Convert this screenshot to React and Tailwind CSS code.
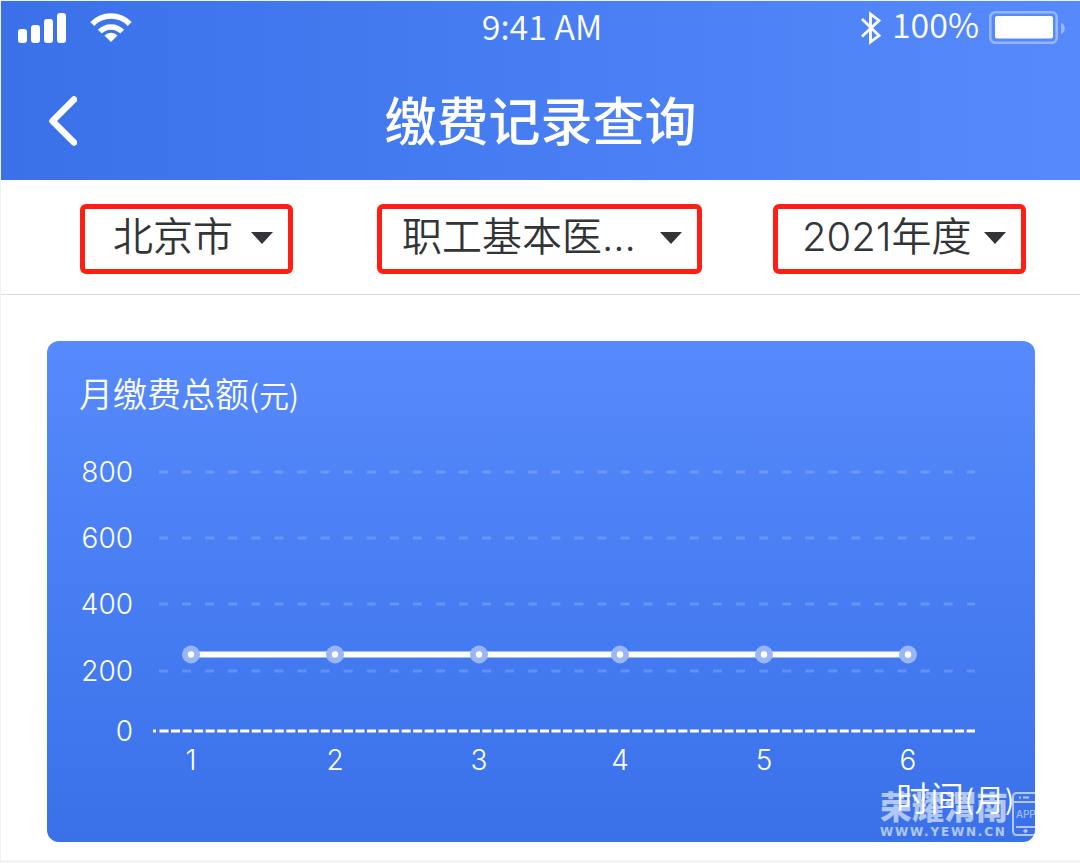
import React, { useState } from 'react';

const MONTHS = [
  { label: '1', x: 144, amount: 250 },
  { label: '2', x: 288, amount: 250 },
  { label: '3', x: 432, amount: 250 },
  { label: '4', x: 573, amount: 250 },
  { label: '5', x: 717, amount: 250 },
  { label: '6', x: 861, amount: 250 },
];

const TICKS = [
  { label: '800', y: 31 },
  { label: '600', y: 97 },
  { label: '400', y: 163 },
  { label: '200', y: 230 },
];

const amountToY = (amount) => 230 - ((amount - 200) / 200) * 66;

const SignalIcon = () => (
  <svg width="48" height="30" viewBox="0 0 48 30" fill="#fff" aria-hidden="true">
    <rect x="0" y="16" width="9" height="14" rx="3" />
    <rect x="13" y="12" width="9" height="18" rx="3" />
    <rect x="26" y="6" width="9" height="24" rx="3" />
    <rect x="39" y="0" width="9" height="30" rx="3" />
  </svg>
);

const WifiIcon = () => (
  <svg width="42" height="30" viewBox="0 0 42 30" fill="none" stroke="#fff" aria-hidden="true">
    <path d="M2.3 11A26 26 0 0 1 39.7 11" strokeWidth="5.6" />
    <path d="M9.8 18.7A15.6 15.6 0 0 1 32.2 18.7" strokeWidth="5.4" />
    <path d="M14.5 22.5A9 9 0 0 1 27.5 22.5L21 29Z" fill="#fff" stroke="none" />
  </svg>
);

const BluetoothIcon = () => (
  <svg width="21" height="34" viewBox="0 0 21 34" fill="none" stroke="#fff" strokeWidth="2.8" aria-hidden="true">
    <path d="M1 8L18 24.5L9.5 31V3L18 9.5L1 25.5" />
  </svg>
);

const BatteryIcon = () => (
  <svg width="77" height="33" viewBox="0 0 77 33" aria-hidden="true">
    <rect x="1.3" y="1.3" width="66.4" height="30.4" rx="5" fill="none" stroke="#fff" strokeOpacity="0.38" strokeWidth="2.6" />
    <rect x="6" y="5" width="58" height="22.5" rx="2" fill="#fff" />
    <path d="M72 12C77 13 77 22 72 23Z" fill="#fff" fillOpacity="0.4" />
  </svg>
);

const StatusBar = () => (
  <div className="grid grid-cols-3 items-center h-[53px] pl-[17px] pr-[14px] text-[34px] leading-none font-[350]">
    <div className="flex items-center gap-6">
      <SignalIcon />
      <WifiIcon />
    </div>
    <div className="pb-1 text-center">9:41 AM</div>
    <div className="flex items-center justify-end gap-2.5">
      <BluetoothIcon />
      <span className="pb-2">100%</span>
      <BatteryIcon />
    </div>
  </div>
);

const FilterSelect = ({ label, options, className }) => {
  const [value, setValue] = useState(options[0]);

  return (
    <div className={`relative h-[70px] ${className}`}>
      <select
        aria-label={label}
        value={value}
        onChange={(e) => setValue(e.target.value)}
        className="appearance-none w-full h-full pb-1 leading-none bg-transparent border-[5px] border-[#ff1f12] rounded-md text-[40px] text-[#333437] outline-none"
      >
        {options.map((o) => (
          <option key={o} value={o}>{o}</option>
        ))}
      </select>
      <svg className="absolute right-5 top-7 pointer-events-none" width="22" height="12" viewBox="0 0 22 12" fill="#333437" aria-hidden="true">
        <path d="M0 0H22L11 12Z" />
      </svg>
    </div>
  );
};

const PaymentChart = () => (
  <svg
    viewBox="0 0 988 401"
    className="block w-full font-[350]"
    role="img"
    aria-label="月缴费总额"
    fill="#fff"
    fontSize="28"
  >
    {TICKS.map((t) => (
      <g key={t.label}>
        <text x="86" y={t.y + 10} textAnchor="end">{t.label}</text>
        <line x1="112" x2="928" y1={t.y} y2={t.y} stroke="#fff" strokeOpacity="0.17" strokeWidth="3" strokeDasharray="9 14.08" />
      </g>
    ))}

    {/* Zero line */}
    <text x="86" y="300" textAnchor="end">0</text>
    <rect x="106" y="288.5" width="3" height="3" />
    <line x1="112.5" x2="928" y1="290" y2="290" stroke="#fff" strokeWidth="3" strokeDasharray="9 2.53" />

    <polyline
      points={MONTHS.map((m) => `${m.x},${amountToY(m.amount)}`).join(' ')}
      fill="none"
      stroke="#fff"
      strokeWidth="6"
    />
    {MONTHS.map((m) => (
      <g key={m.label}>
        <circle cx={m.x} cy={amountToY(m.amount)} r="9" fill="#9ab6fb" />
        <circle cx={m.x} cy={amountToY(m.amount)} r="3.2" />
        <text x={m.x} y="329" textAnchor="middle">{m.label}</text>
      </g>
    ))}

    <text x="849" y="370" fontSize="34">
      时间<tspan fontSize="30">(月)</tspan>
    </text>
  </svg>
);

const Watermark = () => (
  <div className="absolute -right-1 bottom-0.5 flex gap-1 text-white opacity-60 pointer-events-none">
    <div>
      <div className="text-[32px] leading-8 font-black">荣耀渭南</div>
      <div className="font-['DejaVu_Sans'] text-[12px] leading-4 font-bold tracking-[0.15em]">WWW.YEWN.CN</div>
    </div>
    <svg width="27" height="44" viewBox="0 0 27 44" fill="none" stroke="#fff" strokeWidth="2" aria-hidden="true">
      <path d="M1 12V5Q1 1 5 1H22Q26 1 26 5V12M1 12V39Q1 43 5 43H22Q26 43 26 39V12M1 10H26M4 35H26" />
      <path d="M7 5.5H9M11 5.5H17" />
      <path d="M13.5 36.5L16 39L13.5 41.5L11 39Z" fill="#fff" stroke="none" />
      <text x="4" y="26" fontSize="10" fill="#fff" stroke="none">APP</text>
    </svg>
  </div>
);

const App = () => {
  return (
    <div className="min-h-screen bg-[#f4f4f4] border-t border-l border-[#eef1f6] font-['Inter','Noto_Sans_CJK_SC',sans-serif]">
      <div className="bg-white pb-[18px]">
        <header className="bg-gradient-to-r from-[#3a71e9] to-[#568afc] text-white font-['Noto_Sans_CJK_SC',sans-serif]">
          <StatusBar />
          <div className="grid grid-cols-[1fr_auto_1fr] items-center h-[126px] pt-2 px-12">
            <button type="button" aria-label="返回" className="justify-self-start cursor-pointer">
              <svg width="28" height="50" viewBox="0 0 28 50" fill="none" stroke="#fff" strokeWidth="6.5" strokeLinecap="round" strokeLinejoin="round">
                <path d="M25 3.5L3.5 25L25 46.5" />
              </svg>
            </button>
            <h1 className="pb-1 text-[52px] leading-none font-medium">缴费记录查询</h1>
          </div>
        </header>

        {/* Filters */}
        <div className="grid grid-cols-[297fr_396fr_253fr] pt-6 pb-5 pl-[79px] pr-[54px] border-b border-[#dcdcdc] font-[350]">
          <FilterSelect label="城市" options={['北京市', '上海市', '广州市']} className="w-[213px] [&>select]:pl-7" />
          <FilterSelect label="险种" options={['职工基本医...', '职工基本养...', '失业保险']} className="w-[325px] [&>select]:pl-5" />
          <FilterSelect label="年度" options={['2021年度', '2020年度', '2019年度']} className="w-[253px] [&>select]:pl-6" />
        </div>

        <section className="relative overflow-hidden mt-[46px] ml-[46px] mr-[45px] rounded-xl bg-gradient-to-b from-[#568afc] to-[#3a71e9] text-white">
          <h2 className="pt-7.5 pb-6.5 pl-8 text-[34px] leading-11 font-[350] font-['Noto_Sans_CJK_SC',sans-serif]">
            月缴费总额<span className="text-[30px] leading-none">(元)</span>
          </h2>
          <PaymentChart />
          <Watermark />
        </section>
      </div>
    </div>
  );
};

export default App;
